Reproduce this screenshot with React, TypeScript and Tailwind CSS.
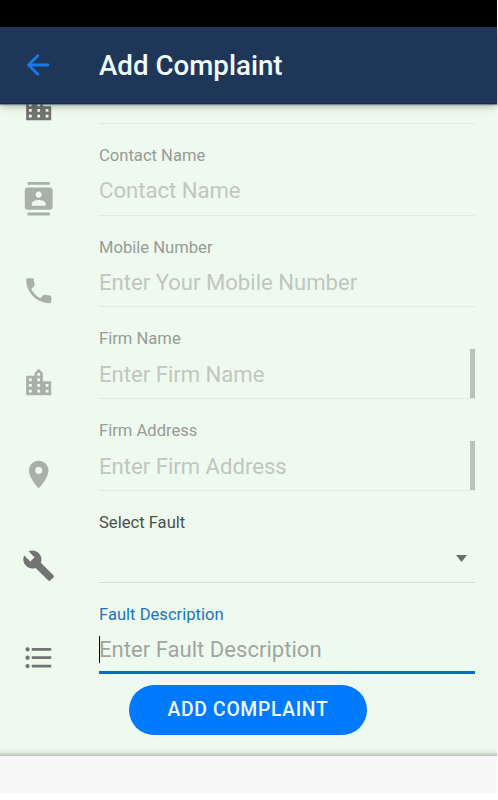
import React from 'react';
import clsx from 'clsx';
import type { IconType } from 'react-icons';
import {
  MdBuild,
  MdContacts,
  MdFormatListBulleted,
  MdLocationCity,
  MdLocationOn,
  MdPhone,
} from 'react-icons/md';

type FieldState = 'normal' | 'disabled' | 'focused';

interface Field {
  id: string;
  icon: IconType;
  label?: string;
  placeholder?: string;
  state: FieldState;
  scrollbar?: boolean;
  select?: boolean;
}

const fields: Field[] = [
  { id: 'city', icon: MdLocationCity, state: 'normal' },
  { id: 'contact', icon: MdContacts, label: 'Contact Name', placeholder: 'Contact Name', state: 'disabled' },
  { id: 'mobile', icon: MdPhone, label: 'Mobile Number', placeholder: 'Enter Your Mobile Number', state: 'disabled' },
  { id: 'firm', icon: MdLocationCity, label: 'Firm Name', placeholder: 'Enter Firm Name', state: 'disabled', scrollbar: true },
  { id: 'address', icon: MdLocationOn, label: 'Firm Address', placeholder: 'Enter Firm Address', state: 'disabled', scrollbar: true },
  { id: 'fault', icon: MdBuild, label: 'Select Fault', state: 'normal', select: true },
  { id: 'description', icon: MdFormatListBulleted, label: 'Fault Description', placeholder: 'Enter Fault Description', state: 'focused' },
];

const labelColors: Record<FieldState, string> = {
  normal: 'text-[#4b504b]',
  disabled: 'text-[#959c95]',
  focused: 'text-[#1a75bb]',
};

const borderColors: Record<FieldState, string> = {
  normal: 'border-b border-[#d6dfd5]',
  disabled: 'border-b border-[#e3ece2]',
  focused: 'border-b-[3px] border-[#0b6dbd]',
};

function FieldRow({ field }: { field: Field }) {
  const Icon = field.icon;
  const disabled = field.state === 'disabled';

  return (
    <div className="flex h-[91.8px] shrink-0 pl-[21.5px] pr-[22px]">
      <div className={clsx('flex w-[77.5px] shrink-0 pt-[58.5px]', disabled ? 'text-[#a9afa9]' : 'text-[#717471]')}>
        <Icon className="size-[33.4px]" />
      </div>
      <div
        className={clsx(
          'flex min-w-0 flex-1 flex-col',
          field.state === 'focused' ? 'h-[91px]' : 'h-full',
          field.id === 'city' ? borderColors.disabled : borderColors[field.state],
        )}
      >
        <div className={clsx('h-[42px] shrink-0 pt-[21px] text-[16.6px] leading-[21px]', labelColors[field.state])}>
          {field.label}
        </div>
        <div className="flex min-h-0 flex-1 items-center justify-between">
          <div className={clsx('flex items-center', field.state === 'focused' && 'pt-[3px]')}>
            {field.state === 'focused' && <span className="-mr-px h-[27px] w-px bg-black" />}
            <span className={clsx('text-[22.1px] leading-[30px]', disabled ? 'text-[#bfc7bf]' : 'text-[#9fa69f]')}>
              {field.placeholder}
            </span>
          </div>
          {field.scrollbar && <span className="h-full w-[5px] bg-[#b9c3b9]" />}
          {field.select && (
            <svg viewBox="0 0 11 7" className="mr-2 mt-0.5 h-[7px] w-[11px] fill-[#697069]">
              <path d="M0 0h11L5.5 7z" />
            </svg>
          )}
        </div>
      </div>
    </div>
  );
}

export default function App() {
  return (
    <div className="flex h-[800px] w-[498px] flex-col overflow-hidden bg-white pr-px font-['Roboto',sans-serif]">
      <div className="h-[27px] shrink-0 bg-black" />
      <header className="z-10 flex h-[77px] shrink-0 items-center border-b border-[#172b4c] bg-[#1e3759] pl-[26px] shadow-[0_1px_1px_rgba(60,85,110,0.6),0_2px_8px_rgba(0,0,0,0.3)]">
        <svg
          viewBox="0 0 24 22"
          className="mr-[49px] h-[22px] w-6 fill-none stroke-[#1a79e8] stroke-[2.8]"
          strokeLinecap="round"
          strokeLinejoin="round"
        >
          <path d="M11.8 1.7 2.5 11l9.3 9.3M2.8 11H22" />
        </svg>
        <h1 className="pt-0.5 text-[27.7px] font-medium leading-8 text-[#effbfc]">Add Complaint</h1>
      </header>

      <main className="flex h-[652px] shrink-0 flex-col overflow-hidden bg-[#effaef]">
        <div className="-mt-[72px] flex flex-col">
          {fields.map((field) => (
            <FieldRow key={field.id} field={field} />
          ))}
        </div>
        <button className="ml-[129px] mt-[10.5px] h-[50px] w-[238px] shrink-0 rounded-full bg-[#007aff] pt-px text-[19.3px] font-medium tracking-[0.7px] text-[#f0fbff]">
          ADD COMPLAINT
        </button>
        <div className="mt-auto h-2 shrink-0 bg-linear-to-b from-[#effaef] via-[#e3ede2] to-[#b9c1b8]" />
      </main>

      <footer className="h-[37px] shrink-0 bg-[#f7f7f7]" />
    </div>
  );
}
